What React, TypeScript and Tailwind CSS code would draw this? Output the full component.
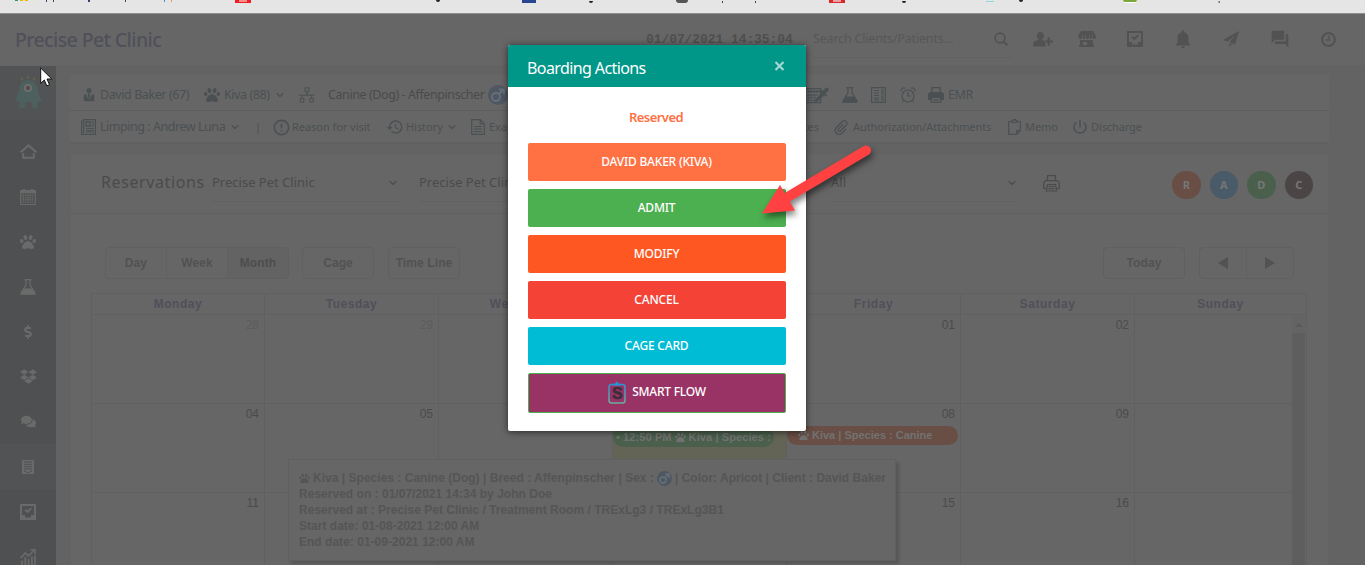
import type { ReactNode } from 'react';
import { ChevronDown } from 'lucide-react';
import { FaComments, FaDollarSign, FaDropbox, FaPaw } from 'react-icons/fa';
import { ImAttachment, ImUserTie } from 'react-icons/im';
import { MdErrorOutline, MdForum, MdHistory, MdNotifications, MdPowerSettingsNew } from 'react-icons/md';

const days = ['Monday', 'Tuesday', 'Wednesday', 'Thursday', 'Friday', 'Saturday', 'Sunday'];

const weeks = [
  ['28', '29', '30', '31', '01', '02', ''],
  ['04', '05', '06', '07', '08', '09', ''],
  ['11', '12', '13', '14', '15', '16', ''],
];

const actions = [
  { label: 'DAVID BAKER (KIVA)', color: 'bg-[#ff7043]' },
  { label: 'ADMIT', color: 'bg-[#4caf50]' },
  { label: 'MODIFY', color: 'bg-[#ff5722]' },
  { label: 'CANCEL', color: 'bg-[#f44336]' },
  { label: 'CAGE CARD', color: 'bg-[#00bcd4]' },
];

const badges = [
  { label: 'R', color: 'bg-[#694e45]' },
  { label: 'A', color: 'bg-[#495a68]' },
  { label: 'D', color: 'bg-[#4a604c]' },
  { label: 'C', color: 'bg-[#4c4545]' },
];

/* ---------- icons ---------- */

function StoreIcon() {
  return (
    <svg width="18" height="16" viewBox="0 0 18 16" fill="currentColor">
      <path d="M3 0h12l3 5v1.5a1.5 1.5 0 0 1-3 0V3.5h-.6v3a1.4 1.4 0 0 1-2.8 0v-3H11v3a1.5 1.5 0 0 1-3 0v-3h-.6v3a1.4 1.4 0 0 1-2.8 0v-3H4v3a1.6 1.6 0 0 1-3.2 0L0 5z" />
      <path fillRule="evenodd" d="M2 9h13v5h1v2H1v-2h1zm3 2v3h4v-3z" />
    </svg>
  );
}

function InboxCheckIcon() {
  return (
    <svg width="16" height="16" viewBox="0 0 16 16" fill="currentColor">
      <path fillRule="evenodd" d="M0 0h16v16H0zM2 2v9h3v2.500h6V11h3V2z" />
      <path d="M4.500 6.500 6 5l1.500 1.600L11 3.500l1 1.200-4.500 4.600z" />
    </svg>
  );
}

function SendIcon() {
  return (
    <svg width="16" height="16" viewBox="0 0 16 16" fill="currentColor">
      <path d="M16 0 0 9l4.500 1.500L13 3.500 6.500 11.200 12 13.500zM6.500 12.300V16l2.500-2.700z" />
    </svg>
  );
}

function ClockIcon() {
  return (
    <svg width="15" height="15" viewBox="0 0 15 15" fill="none" stroke="currentColor">
      <circle cx="7.500" cy="7.500" r="6.400" strokeWidth="2" />
      <path d="M8 3.500V8H5" strokeWidth="1.300" />
    </svg>
  );
}

function SearchIcon() {
  return (
    <svg width="14" height="14" viewBox="0 0 14 14" fill="none" stroke="currentColor">
      <circle cx="6" cy="6" r="4.900" strokeWidth="1.600" />
      <path d="m9.500 9.500 3.700 3.700" strokeWidth="2.200" />
    </svg>
  );
}

function UserPlusIcon() {
  return (
    <svg width="20" height="15" viewBox="0 0 20 15" fill="currentColor">
      <path d="M7.500 0a3.500 3.700 0 0 1 2 6.700V8l3 1.400V14.500H0V12c0-2 2-3.500 5.300-4V6.700A3.500 3.700 0 0 1 7.500 0z" />
      <path d="M14.500 5h2.500v3.200h3v2.500h-3V14h-2.500v-3.300H12V8.200h2.500z" stroke="#666" strokeWidth=".4" />
    </svg>
  );
}

function HomeIcon() {
  return (
    <svg width="17" height="15" viewBox="0 0 17 15" fill="none" stroke="currentColor" strokeWidth="2">
      <path d="m.7 8.300 7.800-6.900 7.800 6.900" />
      <path d="M3.200 9v4.800h10.600V9" />
    </svg>
  );
}

function CalendarIcon() {
  return (
    <svg width="16" height="16" viewBox="0 0 16 16" fill="none" stroke="currentColor">
      <path d="M.7 1.500h14.600v14H.7z" strokeWidth="1.200" />
      <path d="M0 2.800h16" strokeWidth="3" />
      <path d="M2.500 6.200h11M2.500 8.500h11M2.500 10.800h11M2.500 13.100h11" strokeWidth="1.400" strokeDasharray="1.500 .8" />
      <path d="M4 0v1.500M12 0v1.500" strokeWidth="2" />
    </svg>
  );
}

function FlaskIcon() {
  return (
    <svg width="16" height="16" viewBox="0 0 16 16" fill="none" stroke="currentColor">
      <path d="M4.500.600h7M6 .600v5.200L1 14v1.200h14V14l-5-8.200V.600" strokeWidth="1.200" />
      <path d="M4 10h8l3 5H1z" fill="currentColor" />
    </svg>
  );
}

function BuildingIcon() {
  return (
    <svg width="12" height="14" viewBox="0 0 12 14">
      <path d="M0 0h12v14H0z" fill="currentColor" />
      <path d="M2 2h8M2 4.300h8M2 6.600h8M2 8.900h8M2 11.300h2M8 11.300h2" stroke="#4f5051" />
      <path d="M4.500 12h3v1h-3z" fill="#4f5051" />
    </svg>
  );
}

function ChartIcon() {
  return (
    <svg width="16" height="16" viewBox="0 0 16 16" fill="none" stroke="currentColor">
      <path d="m.6 9 4.800-5 3.200 2.800L14 1.500" strokeWidth="1.700" />
      <path d="M10.500.800h4.700V5.500" strokeWidth="1.500" />
      <path d="M2 16v-4.500M5.300 16V8M8.600 16v-6M11.900 16V7.500M14.900 16V6.500" strokeWidth="1.700" />
    </svg>
  );
}

function ReportIcon() {
  return (
    <svg width="15" height="16" viewBox="0 0 15 16" fill="none" stroke="currentColor">
      <path d="M.6 15.400V2h2V.600h11.800v14.800zM2.600 2v12" strokeWidth="1.200" />
      <path d="M5 3h4v4H5z" strokeWidth="1.300" />
      <path d="M10.500 3h2.500M10.500 5h2.500M10.500 7h2.500M5 9.500h8M5 11.500h8M5 13h8" />
    </svg>
  );
}

function SitemapIcon() {
  return (
    <svg width="16" height="16" viewBox="0 0 16 16" fill="none" stroke="currentColor">
      <path d="M6 .800h4v4H6zM1.300 11.500h3.600v3.600H1.300zM10.800 11.500h3.600v3.600h-3.600z" />
      <path d="M8 5v3M0 8.200h15.500M3 8v3M12.600 8v3" />
    </svg>
  );
}

function MaleIcon({ size }: { size: number }) {
  return (
    <svg width={size} height={size} viewBox="0 0 20 20" fill="none">
      <circle cx="10" cy="10" r="10" fill="#4e5762" />
      <circle cx="8" cy="12" r="4" stroke="#68707a" strokeWidth="1.800" />
      <path d="m11 9 4.500-4.500M11 4.300h5v5" stroke="#68707a" strokeWidth="1.800" />
    </svg>
  );
}

function CalculatorIcon() {
  return (
    <svg width="24" height="17" viewBox="0 0 24 17" fill="none" stroke="currentColor">
      <path d="M.600 1.600h15v14H.600z" strokeWidth="1.200" />
      <path d="M2.500 4.500h12" strokeWidth="2" />
      <path d="M2.500 8h10M2.500 10.600h9M2.500 13.300h8" strokeWidth="1.800" strokeDasharray="2 1" />
      <path d="m9 16.500 2-5L17.500 5l2.500 2.500-6.500 6.500z" fill="currentColor" stroke="none" />
      <path d="m15.500 3 6 6" strokeWidth="2" />
      <path d="m18.500 6 3.300-3.500" strokeWidth="4" strokeLinecap="round" />
    </svg>
  );
}

function NewsIcon() {
  return (
    <svg width="15" height="16" viewBox="0 0 15 16" fill="none" stroke="currentColor">
      <path d="M.600.600h13.800v14.800H.600z" strokeWidth="1.100" />
      <path d="M3 3.500h5M3 6h5M3 8.500h5M3 11h5M3 13h5M10 9h3M10 11h3M10 13h3" />
      <path d="M11.500 2.500v5" strokeWidth="2" strokeDasharray="2 .8" />
    </svg>
  );
}

function AlarmIcon() {
  return (
    <svg width="16" height="16" viewBox="0 0 16 16" fill="none" stroke="currentColor" strokeWidth="1.200">
      <circle cx="8" cy="9" r="6" />
      <path d="M8 5v4h3M1 4.500a3 3 0 0 1 4-3.400M15 4.500a3 3 0 0 0-4-3.400M3.500 13.500 2 15.500M12.500 13.500l1.500 2" />
    </svg>
  );
}

function PrinterIcon({ solid = false }: { solid?: boolean }) {
  if (solid) {
    return (
      <svg width="16" height="16" viewBox="0 0 16 16" fill="none" stroke="currentColor">
        <path d="M4 5V.700h8V5" strokeWidth="1.300" />
        <path d="M2 5h12l2 2v6h-3l-1-3H4l-1 3H0V7z" fill="currentColor" stroke="none" />
        <path d="M4 10.500h8l1 4.700H3zM5.500 12.800h5" strokeWidth="1.200" />
      </svg>
    );
  }
  return (
    <svg width="17" height="17" viewBox="0 0 17 17" fill="none" stroke="currentColor" strokeWidth="1.200">
      <path d="M4.500 5.500V.700h8v4.800M3.500 13.500H.700V8l1.800-2.400h12L16.300 8v5.500h-2.800" />
      <path d="M4.500 9.500h8l1.200 6.500H3.300zM5.500 11.500h6M5.500 13.700h6" />
    </svg>
  );
}

function FileIcon() {
  return (
    <svg width="14" height="16" viewBox="0 0 14 16" fill="none" stroke="currentColor" strokeWidth="1.200">
      <path d="M.700.700h8.600l4 4.300v10.300H.700zM9.300.700V5h4" />
      <path d="M3 7.500h8M3 10h8M3 12.500h8" />
    </svg>
  );
}

function ClipboardIcon() {
  return (
    <svg width="13" height="16" viewBox="0 0 13 16" fill="none" stroke="currentColor" strokeWidth="1.200">
      <path d="M4 2.500H.700v12.800h8l3.600-3.600V2.500H9M8.700 15V11.700h3.500" />
      <path d="M4 3.500v-2h1.500V.600h2v.900H9v2z" />
    </svg>
  );
}

function MonsterIcon() {
  return (
    <svg width="28" height="34" viewBox="0 0 28 34">
      <path d="M14 4c6 0 9 4 9.500 10 1 5 4 8 4 12l-4-1v4l1 3h-6l-1-6h-6l-1 6h-6l1-3v-4l-4 1c0-4 2-7 4-12C5 8 8 4 14 4z" fill="#4d605d" />
      <circle cx="14" cy="12" r="4" fill="#6c7070" />
      <circle cx="14" cy="12" r="2.200" fill="#5b4a49" />
      <g fill="#625f50">
        <circle cx="8" cy="3" r="1.500" />
        <circle cx="14" cy="1.500" r="1.500" />
        <circle cx="20" cy="3" r="1.500" />
      </g>
    </svg>
  );
}

function SmartFlowIcon() {
  return (
    <span className="relative flex h-[22px] w-[18px] items-center justify-center">
      <svg className="absolute inset-0" width="18" height="22" viewBox="0 0 18 22" fill="none">
        <defs>
          <linearGradient id="flow" x1="0" y1="0" x2="0" y2="1">
            <stop offset="0" stopColor="#2f93d0" />
            <stop offset="1" stopColor="#67ae9b" />
          </linearGradient>
        </defs>
        <rect x="1" y="2.500" width="16" height="18.500" rx="2.500" stroke="url(#flow)" strokeWidth="1.500" />
        <path d="M5 3.500V2h2.200C7.500.500 8 0 9 0s1.500.500 1.800 2H13v1.500z" fill="#2396d8" />
      </svg>
      <span className="relative mt-[2px] font-['Liberation_Sans'] text-[16px] leading-none font-bold text-[#3a2f3a] [-webkit-text-stroke:0.6px_#3a2f3a]">S</span>
    </span>
  );
}

/* ---------- page parts ---------- */

function Chevron() {
  return <ChevronDown size={12} strokeWidth={2.2} className="shrink-0" />;
}

// Fixed-width slot so toolbar items keep their rhythm whatever the label width
function Slot({ className, children }: { className: string; children?: ReactNode }) {
  return <div className={`flex shrink-0 items-center whitespace-nowrap ${className}`}>{children}</div>;
}

function BookmarksBar() {
  return (
    <div className="flex h-[14px] items-start overflow-hidden border-b border-[#8f8f8f] bg-[#e5e5e5]">
      <Slot className="w-[31px] pl-[15px]">
        <i className="h-[1px] w-[3px] bg-[#2a9a5a]" />
        <i className="ml-[2px] h-[1px] w-[3px] bg-[#f4b400]" />
        <i className="ml-[2px] h-[1px] w-[3px] bg-[#f4b400]" />
      </Slot>
      <Slot className="w-[204px] pl-[15px]">
        <i className="mr-[6px] h-[2px] w-px bg-[#35406b]" />
        <i className="mr-[34px] h-[2px] w-px bg-[#35406b]" />
        <i className="mr-[35px] h-[2px] w-[2px] bg-[#35406b]" />
        <i className="mr-[38px] h-[2px] w-px bg-[#35406b]" />
        <i className="mr-[6px] h-[2px] w-px bg-[#3795ce]" />
        <i className="h-[2px] w-px bg-[#e19a42]" />
      </Slot>
      <Slot className="w-[201px]">
        <i className="h-[3px] w-4 border-x-4 border-b border-[#ee1d23] bg-[#f78b8e]" />
      </Slot>
      <Slot className="w-[86px]">
        <i className="h-[2px] w-1 rounded-b bg-[#222]" />
      </Slot>
      <Slot className="w-[154px]">
        <i className="h-[3px] w-[14px] bg-[#27468f]" />
        <i className="ml-[53px] h-[2px] w-1 rounded-b bg-[#222]" />
      </Slot>
      <Slot className="w-[153px]">
        <i className="h-[3px] w-3 rounded-b-full bg-[#555]" />
        <i className="ml-[34px] h-[2px] w-px bg-[#35406b]" />
        <i className="ml-[32px] h-[2px] w-px bg-[#35406b]" />
      </Slot>
      <Slot className="w-[157px]">
        <i className="h-[3px] w-4 border-x-4 border-b border-[#d9262c] bg-[#f0a0a0]" />
        <i className="ml-[57px] h-[2px] w-1 rounded-b bg-[#222]" />
      </Slot>
      <Slot className="w-[137px]">
        <i className="h-[1px] w-2 bg-[#8ed7e8]" />
        <i className="ml-[25px] h-[2px] w-1 rounded-b bg-[#222]" />
      </Slot>
      <Slot className="w-[160px]">
        <i className="h-[3px] w-[14px] rounded-b-full border-b border-white bg-[#7ba63a]" />
        <i className="ml-[81px] h-[2px] w-px bg-[#e19a42]" />
        <i className="h-[2px] w-px bg-[#3795ce]" />
      </Slot>
    </div>
  );
}

function Header() {
  return (
    <header className="flex h-[52px] border-b border-[#636363] bg-[#666] text-[#525252]">
      <Slot className="w-[631px] pl-[15px] text-[19.5px] font-medium tracking-[-0.61px] text-[#50505a]">Precise Pet Clinic</Slot>
      <Slot className="ml-[15px] w-[152px] pt-[1px] font-['Liberation_Mono'] text-[13px] font-bold tracking-[-0.08px] text-[#4f4f4f]">
        01/07/2021 14:35:04
      </Slot>
      <div className="ml-[15px] flex h-[44px] w-[200px] shrink-0 items-center justify-between border-b border-[#616161] pt-[7px] pr-[5px]">
        <span className="text-[12.5px] tracking-[-0.18px] text-[#575757]">Search Clients/Patients...</span>
        <SearchIcon />
      </div>
      <div className="flex h-[50px] items-center">
        <Slot className="w-[46px] pl-[20px]"><UserPlusIcon /></Slot>
        <Slot className="w-[49px] pl-[19px]"><StoreIcon /></Slot>
        <Slot className="w-[49px] pl-[19px]"><InboxCheckIcon /></Slot>
        <Slot className="w-[48px] pl-[15px]"><MdNotifications size={22} /></Slot>
        <Slot className="w-[48px] pl-[18px]"><SendIcon /></Slot>
        <Slot className="w-[48px] pl-[17px]"><MdForum size={20} /></Slot>
        <Slot className="w-[48px] pl-[20px]"><ClockIcon /></Slot>
      </div>
    </header>
  );
}

function Sidebar() {
  return (
    <aside className="w-14 shrink-0 bg-[#4f5051] text-[#6a6a6a]">
      <div className="flex h-[54px] items-center justify-center bg-[#525354]">
        <MonsterIcon />
      </div>
      <nav className="flex flex-col pt-[9px] [&>div]:flex [&>div]:h-[45px] [&>div]:shrink-0 [&>div]:items-center [&>div]:justify-center">
        <div><HomeIcon /></div>
        <div><CalendarIcon /></div>
        <div><FaPaw size={16} /></div>
        <div><FlaskIcon /></div>
        <div><FaDollarSign size={14} /></div>
        <div><FaDropbox size={17} /></div>
        <div><FaComments size={15} /></div>
        <div className="bg-[#525354]"><BuildingIcon /></div>
        <div><InboxCheckIcon /></div>
        <div><ChartIcon /></div>
      </nav>
    </aside>
  );
}

function PatientCard() {
  return (
    <section className="h-[70px] border-b-2 border-[#616161] bg-[#666] text-[#4b5053]">
      <div className="flex h-[37px] border-b border-[#5c5d5e] pt-[6px] pl-[12px] text-[12.5px] tracking-[-0.42px]">
        <Slot className="w-[18px]"><ImUserTie size={14} /></Slot>
        <Slot className="w-[104px]">David Baker (67)</Slot>
        <Slot className="w-[20px]"><FaPaw size={16} /></Slot>
        <Slot className="w-[75px] gap-[4px]">Kiva (88) <Chevron /></Slot>
        <Slot className="w-[29px]"><SitemapIcon /></Slot>
        <Slot className="w-[160px] text-[#4b4b4b]">Canine (Dog) - Affenpinscher</Slot>
        <Slot className="w-[317px]"><MaleIcon size={20} /></Slot>
        <Slot className="w-[37px]"><CalculatorIcon /></Slot>
        <Slot className="w-[29px]"><FlaskIcon /></Slot>
        <Slot className="w-[29px]"><NewsIcon /></Slot>
        <Slot className="w-[28px]"><AlarmIcon /></Slot>
        <Slot className="w-[20px]"><PrinterIcon solid /></Slot>
        <Slot className="w-[40px]">EMR</Slot>
      </div>
      <div className="flex h-[32px] pl-[11px] text-[11px]">
        <Slot className="w-[19px]"><ReportIcon /></Slot>
        <Slot className="w-[155px] gap-[4px] text-[12.5px] tracking-[-0.46px]">
          Limping : Andrew Luna <Chevron />
        </Slot>
        <Slot className="w-[17px]">|</Slot>
        <Slot className="w-[20px]"><MdErrorOutline size={19} /></Slot>
        <Slot className="w-[94px] tracking-[-0.05px]">Reason for visit</Slot>
        <Slot className="w-[20px]"><MdHistory size={18} /></Slot>
        <Slot className="w-[65px] gap-[3px] tracking-[-0.05px]">History <Chevron /></Slot>
        <Slot className="w-[18px]"><FileIcon /></Slot>
        <Slot className="w-[300px]">Examination</Slot>
        <Slot className="w-[45px] justify-end pr-[15px]">Notes</Slot>
        <Slot className="w-[19px]"><ImAttachment size={15} /></Slot>
        <Slot className="w-[155px] tracking-[-0.07px]">Authorization/Attachments</Slot>
        <Slot className="w-[17px]"><ClipboardIcon /></Slot>
        <Slot className="w-[46px] tracking-[-0.1px]">Memo</Slot>
        <Slot className="w-[20px]"><MdPowerSettingsNew size={18} /></Slot>
        <Slot className="w-[60px] tracking-[-0.1px]">Discharge</Slot>
      </div>
    </section>
  );
}

function Select({ label, className }: { label: string; className: string }) {
  return (
    <div className={`flex h-[36px] shrink-0 items-center justify-between border-b border-[#616161] text-[13px] ${className}`}>
      {label}
      <Chevron />
    </div>
  );
}

function CalendarToolbar() {
  return (
    <div className="mt-[33px] flex h-8 px-[34px] font-['Liberation_Sans'] text-[12px] font-bold tracking-[0.1px] text-[#525252] [&>div]:flex [&>div]:rounded [&>div]:border [&>div]:border-[#606060] [&_span]:flex [&_span]:items-center [&_span]:justify-center">
      <div className="w-[184px] overflow-hidden">
        <span className="w-[61px] border-r border-[#606060]">Day</span>
        <span className="w-[61px] border-r border-[#606060]">Week</span>
        <span className="flex-1 bg-[#636363] text-[#4d4d4d]">Month</span>
      </div>
      <div className="ml-[13px] w-[72px]"><span className="flex-1">Cage</span></div>
      <div className="ml-[14px] w-[72px]"><span className="flex-1">Time Line</span></div>
      <div className="ml-auto w-[82px]"><span className="flex-1">Today</span></div>
      <div className="ml-[14px] w-[95px]">
        <span className="w-[47px] border-r border-[#606060]">
          <svg width="10" height="12" viewBox="0 0 10 12"><path d="M10 0v12L0 6z" fill="currentColor" /></svg>
        </span>
        <span className="flex-1">
          <svg width="10" height="12" viewBox="0 0 10 12"><path d="M0 0v12l10-6z" fill="currentColor" /></svg>
        </span>
      </div>
    </div>
  );
}

function Calendar() {
  return (
    <div className="relative mt-[14px] ml-[20px] w-[1216px] border-t border-l border-[#606060] font-['Liberation_Sans']">
      <div className="flex h-[21px] border-b border-[#606060]">
        {days.map((day) => (
          <div key={day} className="flex w-[174px] shrink-0 items-center justify-center border-r border-[#606060] text-[12px] font-bold tracking-[0.55px] text-[#50505a] first:w-[173px] last:w-[172px]">
            {day}
          </div>
        ))}
      </div>
      {weeks.map((week, row) => (
        <div key={row} className="flex h-[89px] border-b border-[#606060]">
          {week.map((day, col) => (
            <div
              key={col}
              className={`relative w-[174px] shrink-0 border-r border-[#606060] pt-[1px] pr-[5px] text-right text-[12px] first:w-[173px] last:w-[172px] ${
                row === 0 && col < 4 ? 'text-[#5c5c5c]' : 'text-[#4b4b4b]'
              } ${row === 1 && col === 3 ? 'bg-[#646456]' : ''}`}
            >
              {day}
              {row === 1 && col === 3 && (
                <div className="absolute top-[23px] left-0 flex h-[20px] w-[161px] items-center overflow-hidden rounded-full bg-[#4a604c] pr-[1px] pl-[3px] text-[11px] font-bold tracking-[0.1px] whitespace-nowrap text-[#727272]">
                  • 12:50 PM <FaPaw size={11} className="mx-[3px] shrink-0" />
                  <span className="overflow-hidden">Kiva | Species : Canine</span>
                </div>
              )}
              {row === 1 && col === 4 && (
                <div className="absolute top-[22px] left-0 flex h-[19px] w-[171px] items-center rounded-full bg-[#694e45] pl-[11px] text-[11px] font-bold whitespace-nowrap text-[#727272]">
                  <FaPaw size={11} className="mr-[3px] shrink-0" /> Kiva | Species : Canine
                </div>
              )}
            </div>
          ))}
        </div>
      ))}
      {/* scrollbar */}
      <div className="absolute top-[22px] right-[2px] flex h-[250px] w-[13px] flex-col items-center bg-[#646464] pt-[7px]">
        <svg width="8" height="4" viewBox="0 0 8 4"><path d="M0 4h8L4 0z" fill="#5a5a5a" /></svg>
        <div className="mt-[6px] w-full flex-1 bg-[#5e5e5e]" />
      </div>
      {/* reservation hover card */}
      <div className="absolute top-[165px] left-[196px] h-[102px] w-[608px] border border-[#606060] bg-[#666] pt-[10px] pl-[10px] text-[12px] leading-4 font-bold tracking-[0.02px] whitespace-nowrap text-[#555] shadow-[3px_3px_3px_rgba(0,0,0,0.15)]">
        <div className="flex h-4 items-center">
          <FaPaw size={11} className="mr-[3px] shrink-0" />
          Kiva | Species : Canine (Dog) | Breed : Affenpinscher | Sex :
          <span className="mx-[3px]"><MaleIcon size={15} /></span>
          | Color: Apricot | Client : David Baker
        </div>
        <div>Reserved on : 01/07/2021 14:34 by John Doe</div>
        <div>Reserved at : Precise Pet Clinic / Treatment Room / TRExLg3 / TRExLg3B1</div>
        <div>Start date: 01-08-2021 12:00 AM</div>
        <div>End date: 01-09-2021 12:00 AM</div>
      </div>
    </div>
  );
}

function Reservations() {
  return (
    <section className="mt-[9px] h-[450px] border border-[#626262] bg-[#666]">
      <div className="flex h-[60px] items-center border-b border-[#606060] pl-[30px] text-[#4b4b4b]">
        <Slot className="w-[111px] pb-[3px] text-[16px] tracking-[0.6px]">Reservations</Slot>
        <Select label="Precise Pet Clinic" className="w-[187px]" />
        <Select label="Precise Pet Clinic" className="ml-[20px] w-[187px]" />
        <Select label="All" className="ml-[225px] w-[187px]" />
        <Slot className="ml-[25px] w-[129px]"><PrinterIcon /></Slot>
        <div className="mt-[3px] flex gap-[9px]">
          {badges.map((b) => (
            <div key={b.label} className={`flex size-[28.5px] items-center justify-center rounded-full text-[11px] font-bold text-[#777] ${b.color}`}>
              {b.label}
            </div>
          ))}
        </div>
      </div>
      <CalendarToolbar />
      <Calendar />
    </section>
  );
}

function BoardingModal() {
  return (
    <div className="absolute top-[45px] left-[508px] flex h-[386px] w-[298px] flex-col overflow-hidden rounded-[2px] bg-white shadow-[0_1px_7px_rgba(0,0,0,0.6)]">
      <div className="flex h-[42px] shrink-0 items-center justify-between bg-[#009688] pr-[21px] pl-[19px] text-white">
        <h2 className="pt-[4px] text-[16px] tracking-[-0.6px]">Boarding Actions</h2>
        <svg width="11" height="10" viewBox="0 0 11 10" className="mb-[1px]" stroke="#a3d8d3" strokeWidth="2.2">
          <path d="m1.500 1 8 8M9.500 1l-8 8" />
        </svg>
      </div>
      <div className="flex flex-col gap-2 px-5 pt-[20px]">
        <div className="h-[28px] pr-[2px] text-center text-[13px] leading-[20px] font-semibold tracking-[-0.55px] text-[#ff7043]">Reserved</div>
        {actions.map((action) => (
          <button key={action.label} className={`h-[38px] rounded-[2px] pr-[1px] text-[12px] font-medium tracking-[-0.2px] text-white ${action.color}`}>
            {action.label}
          </button>
        ))}
        <button className="flex h-10 items-center justify-center gap-[6px] rounded-[2px] border border-[#4caf50] bg-[#993366] text-[12px] font-medium tracking-[-0.25px] text-white">
          <SmartFlowIcon />
          <span className="-mt-[2px]">SMART FLOW</span>
        </button>
      </div>
    </div>
  );
}

function PointerArrow() {
  return (
    <svg className="absolute top-[140px] left-[750px]" width="130" height="90" viewBox="0 0 130 90">
      <g style={{ filter: 'drop-shadow(2px 4px 3px rgba(0,0,0,.5))' }} fill="#ff4141">
        <path d="M116 10.500 36 58" stroke="#ff4141" strokeWidth="10" strokeLinecap="round" />
        <path d="m12 73.500 18-28.500 15 25.500z" />
      </g>
    </svg>
  );
}

function MouseCursor() {
  return (
    <svg className="absolute top-[67px] left-[40px]" width="13" height="20" viewBox="0 0 13 20">
      <path d="M.700 1v15.300l3.600-3.300 2.500 5.800 2.700-1.100L7 12h4.800z" fill="#fff" stroke="#111" />
    </svg>
  );
}

export default function App() {
  return (
    <div className="relative h-[565px] w-[1365px] overflow-hidden bg-[#636363] font-['Noto_Sans',sans-serif]">
      <BookmarksBar />
      <Header />
      <div className="flex h-[499px]">
        <Sidebar />
        <main className="ml-[14px] w-[1259px] pt-[8px]">
          <PatientCard />
          <Reservations />
        </main>
      </div>
      <BoardingModal />
      <PointerArrow />
      <MouseCursor />
    </div>
  );
}
